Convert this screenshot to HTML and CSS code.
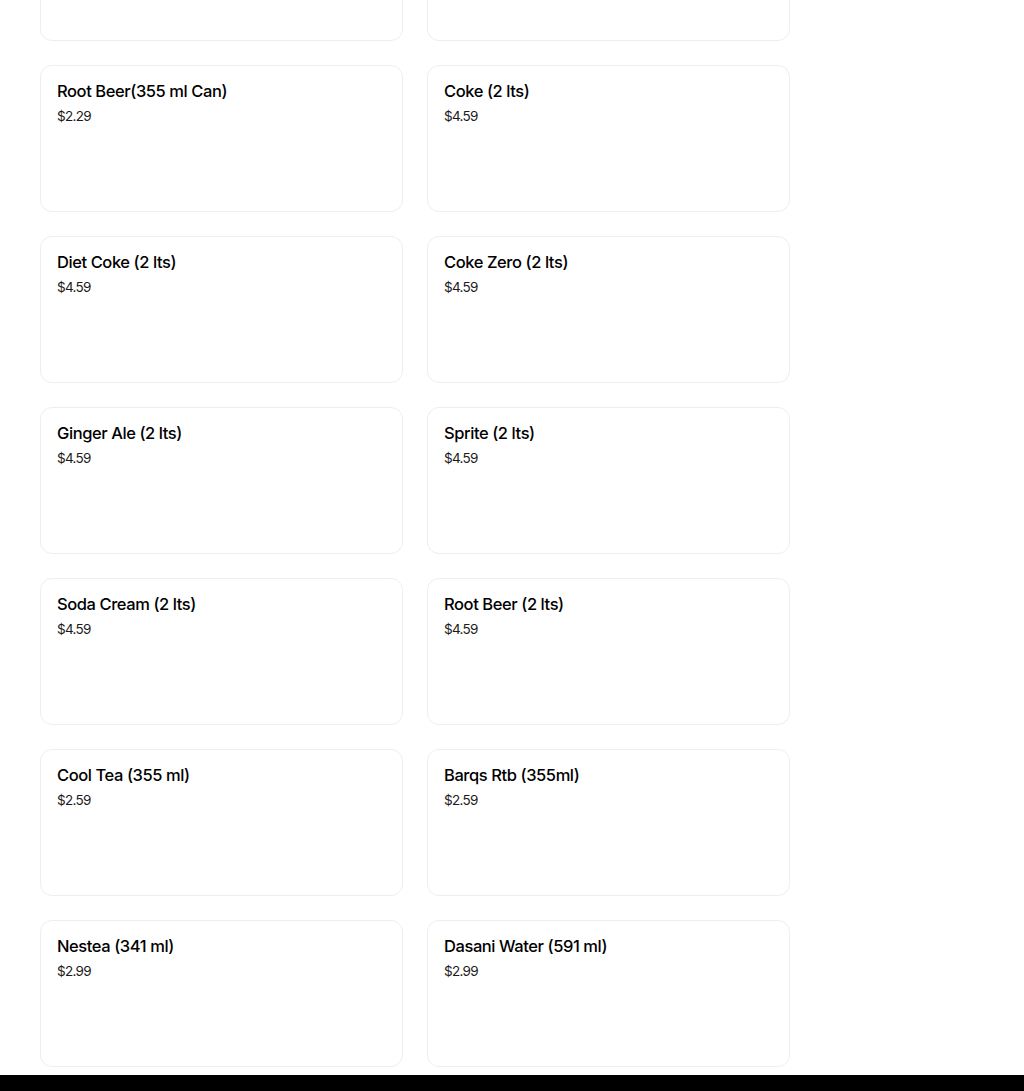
FILE: index.html
```html
<!DOCTYPE html>
<html>
<head>
<meta charset="utf-8">
<link rel="stylesheet" href="styles.css">
</head>
<body>
<main class="menu">
  <div class="grid">
    <div class="card"></div>
    <div class="card"></div>
    <div class="card"><div class="title">Root Beer(355 ml Can)</div><div class="price">$2.29</div></div>
    <div class="card"><div class="title">Coke (2 lts)</div><div class="price">$4.59</div></div>
    <div class="card"><div class="title">Diet Coke (2 lts)</div><div class="price">$4.59</div></div>
    <div class="card"><div class="title">Coke Zero (2 lts)</div><div class="price">$4.59</div></div>
    <div class="card"><div class="title">Ginger Ale (2 lts)</div><div class="price">$4.59</div></div>
    <div class="card"><div class="title">Sprite (2 lts)</div><div class="price">$4.59</div></div>
    <div class="card"><div class="title">Soda Cream (2 lts)</div><div class="price">$4.59</div></div>
    <div class="card"><div class="title">Root Beer (2 lts)</div><div class="price">$4.59</div></div>
    <div class="card"><div class="title">Cool Tea (355 ml)</div><div class="price">$2.59</div></div>
    <div class="card"><div class="title">Barqs Rtb (355ml)</div><div class="price">$2.59</div></div>
    <div class="card"><div class="title">Nestea (341 ml)</div><div class="price">$2.99</div></div>
    <div class="card"><div class="title">Dasani Water (591 ml)</div><div class="price">$2.99</div></div>
  </div>
</main>
<footer class="footer"></footer>
</body>
</html>
```
FILE: styles.css
```css
html, body {
  margin: 0;
  padding: 0;
  background: #fff;
  font-family: Inter, "Noto Sans", Roboto, sans-serif;
  color: #000;
}
body {
  overflow: hidden;
  height: 1091px;
}
.menu {
  padding: 0 0 8px 40px;
}
.grid {
  display: grid;
  grid-template-columns: 363px 363px;
  column-gap: 24px;
  row-gap: 24px;
  margin-top: -106px;
}
.card {
  box-sizing: border-box;
  height: 147px;
  border: 1px solid #eeeeee;
  border-radius: 12px;
  padding: 13px 16px 16px 16px;
}
.title {
  font-size: 16.5px;
  font-weight: 500;
  line-height: 24px;
  letter-spacing: -0.42px;
}
.price {
  font-size: 13.5px;
  line-height: 20px;
  margin-top: 3px;
  color: #1a1a1a;
  letter-spacing: -0.7px;
}
.footer {
  background: #000;
  height: 40px;
}
```
